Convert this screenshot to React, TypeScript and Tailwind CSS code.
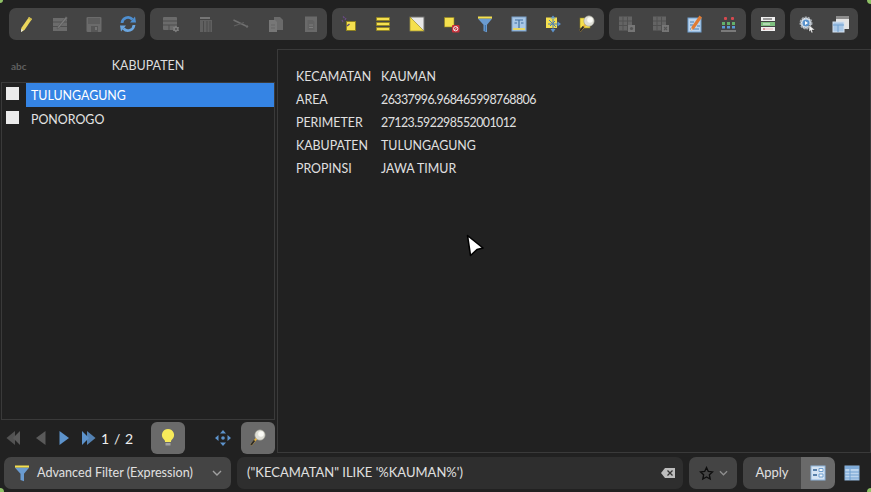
import type { ReactNode } from "react";

const font = { fontFamily: "Lato, 'Noto Sans', sans-serif" };

function Svg({ children, size = 18 }: { children: ReactNode; size?: number }) {
  return (
    <svg width={size} height={size} viewBox="0 0 18 18" className="block">
      {children}
    </svg>
  );
}

function Cell({ children, wide }: { children: ReactNode; wide?: boolean }) {
  return (
    <div className={`flex h-8 shrink-0 items-center justify-center ${wide ? "w-[35px]" : "w-[34px]"}`}>{children}</div>
  );
}

function Group({ children, className }: { children: ReactNode; className: string }) {
  return <div className={`flex h-8 items-center rounded-[7px] bg-[#444444] ${className}`}>{children}</div>;
}

const grey = "#6b6b6b";
const yellow = "#f5e04e";
const edge = "#8f8220";

const Pencil = () => (
  <Svg>
    <path d="M12 2 L15 4 L7.5 15 L4 17 L4.3 13 Z" fill="#ecd75c" />
    <path d="M12 2 L15 4 L14 5.4 L11 3.4 Z" fill="#cdb94c" />
    <path d="M4.2 14 L6.3 15.6 L4 17 Z" fill="#e8e8e0" />
  </Svg>
);
const EditGrid = () => (
  <Svg>
    <rect x="2" y="3" width="14" height="13" fill={grey} />
    <path d="M2 7h14M2 11.5h14" stroke="#505050" strokeWidth="1.2" />
    <path d="M15 1.5 L16.5 3 L8 13 L6 14 L6.5 12 Z" fill="#7a7a7a" stroke="#505050" strokeWidth="0.5" />
  </Svg>
);
const Save = () => (
  <Svg>
    <rect x="1.5" y="2" width="15" height="15" rx="1" fill={grey} />
    <rect x="3" y="3" width="12" height="6" fill="#5d5d5d" />
    <rect x="6" y="11" width="7" height="6" fill="#575757" />
    <rect x="10" y="12" width="2" height="3" fill="#747474" />
  </Svg>
);
const Refresh = () => (
  <svg width="18" height="18" viewBox="0 0 18 18" fill="none" className="block">
    <path d="M3 8 A6 6 0 0 1 13.5 4.5" stroke="#4f8fd0" strokeWidth="2.8" />
    <path d="M11 7.5 L17 7.5 L16 1.5 Z" fill="#4f8fd0" />
    <path d="M15 10 A6 6 0 0 1 4.5 13.5" stroke="#6aa5de" strokeWidth="2.8" />
    <path d="M7 10.5 L1 10.5 L2 16.5 Z" fill="#6aa5de" />
  </svg>
);
const AddCol = () => (
  <Svg>
    <rect x="1" y="2" width="14" height="13" rx="1" fill={grey} />
    <path d="M1 6h14M1 10h14M7 10v5" stroke="#4f4f4f" />
    <path d="M14 10.5 L15 12 L17 12 L16.5 14 L17 16 L15 16 L14 17.5 L12.5 16 L11 16 L11.5 14 L11 12 L12.5 12 Z" fill="#7d7d7d" />
    <circle cx="14" cy="14" r="1" fill="#4f4f4f" />
  </Svg>
);
const DeleteCol = () => (
  <Svg>
    <path d="M3 2h10v2H3z" fill="#757575" />
    <rect x="3" y="5" width="12" height="12" fill="#606060" />
    <path d="M6.5 6v11M10 6v11M13 6v11" stroke="#4a4a4a" />
  </Svg>
);
const Cut = () => (
  <Svg>
    <path d="M1.5 5 L14 11" stroke="#6f6f6f" strokeWidth="1.5" />
    <path d="M2 11 L12 7.5" stroke="#606060" strokeWidth="1.1" />
    <circle cx="15" cy="11.5" r="1.2" fill="#6c6c6c" />
  </Svg>
);
const Copy = () => (
  <Svg>
    <path d="M7 2h6l3 3v10H7z" fill="#6a6a6a" />
    <path d="M2 5h6l2 2v10H2z" fill="#777777" />
    <path d="M4 10h4M4 13h4" stroke="#666" />
  </Svg>
);
const Paste = () => (
  <Svg>
    <rect x="3" y="1.5" width="12" height="15.5" fill="#6a6a6a" />
    <path d="M5.5 5h5l2 2v8h-7z" fill="#626262" />
    <path d="M7 10h4M7 12.5h4" stroke="#7d7d7d" />
  </Svg>
);
const SelectExpr = () => (
  <Svg>
    <rect x="6.5" y="6.5" width="9" height="9" fill={yellow} stroke={edge} />
    <path d="M3 1.5 L4.5 3 M2 5 L3 7 M6 3 L5 5" stroke="#6b4a86" strokeWidth="1.2" />
    <path d="M7 11 L9.5 9" stroke="#5b4a76" strokeWidth="1.4" />
  </Svg>
);
const Rows = () => (
  <Svg>
    <path d="M2.5 2.5h13v3h-13zM2.5 7.5h13v3h-13zM2.5 12.5h13v3h-13z" fill={yellow} stroke={edge} strokeWidth="0.8" />
  </Svg>
);
const Invert = () => (
  <Svg>
    <rect x="2" y="2" width="14" height="14" fill="#e8e8e8" stroke="#6e6e6e" />
    <path d="M2 2 L16 16 L2 16 Z" fill={yellow} stroke={edge} strokeWidth="0.6" />
  </Svg>
);
const Deselect = () => (
  <Svg>
    <rect x="2.5" y="2.5" width="9.5" height="9.5" fill={yellow} stroke={edge} strokeWidth="0.6" />
    <rect x="10" y="10" width="7.5" height="7.5" rx="1" fill="#c9303a" />
    <circle cx="13.7" cy="13.7" r="2.2" fill="none" stroke="#f2f2f2" strokeWidth="1" />
    <path d="M12.2 15.2 L15.2 12.2" stroke="#f2f2f2" strokeWidth="0.9" />
  </Svg>
);
const Funnel = () => (
  <Svg>
    <path d="M2 1.5h14v2.2H2z" fill={yellow} />
    <path d="M2 3.7h14l-5 6v7.5L7.5 16v-6.3z" fill="#6a9bd0" />
    <path d="M8.8 10h1.2v6h-1.2z" fill="#3f75ad" />
  </Svg>
);
const BookIcon = () => (
  <Svg>
    <rect x="2" y="2" width="14" height="14" fill="#a9c7e6" stroke="#7aa0c8" />
    <path d="M5 5h8M9 5v8M4.5 8h2.5M11 8h2.5" stroke="#3f6f9f" strokeWidth="1.2" />
    <rect x="3" y="13" width="12" height="2" fill="#e8d766" />
  </Svg>
);
const PanSel = () => (
  <Svg>
    <rect x="2" y="2.5" width="11" height="10.5" fill={yellow} />
    <path d="M9 0.5 L11.5 3.5 H6.5 Z M9 17.5 L6.5 14 H11.5 Z M17 9 L13.5 6.5 V11.5 Z" fill="#5d93cc" />
    <path d="M5 5 L12 12 M6 11 L11 6 M9 4v10M4 9h10" stroke="#4a7fb5" />
  </Svg>
);
const ZoomSel = ({ square = true }: { square?: boolean }) => (
  <Svg>
    {square && <rect x="2" y="3" width="10" height="10" fill={yellow} stroke={edge} strokeWidth="0.6" />}
    <path d="M8 9 L2 16" stroke="#e8b33c" strokeWidth="2" />
    <path d="M5.5 11.5 L2 16" stroke="#2b2b2b" strokeWidth="2" />
    <circle cx="11" cy="6" r="5.2" fill="#deded6" stroke="#9a9a90" strokeWidth="0.6" />
    <circle cx="12" cy="5" r="2.8" fill="#fbfbf6" />
  </Svg>
);
const Columns = ({ mark }: { mark: "cog" | "x" }) => (
  <Svg>
    <rect x="1" y="1.5" width="13" height="14" fill="#646464" />
    <path d="M5 1.5v14M9.5 1.5v14M1 6h13M1 10.5h13" stroke="#505050" />
    <rect x="10" y="10" width="7" height="7" fill="#767676" />
    {mark === "cog" ? (
      <circle cx="13.5" cy="13.5" r="1.6" fill="#555" />
    ) : (
      <path d="M12 12l3 3M15 12l-3 3" stroke="#555" strokeWidth="1.1" />
    )}
  </Svg>
);
const FormEdit = () => (
  <Svg>
    <rect x="2" y="3" width="13" height="14" fill="#bcd5ee" stroke="#6f9fd0" />
    <path d="M4 7h4M4 10h3M4 14h9M11 11h3" stroke="#4a7fb5" />
    <path d="M13.5 0.5 L16 2.5 L8 14 L5 15.5 L5.5 12 Z" fill="#e07b33" />
    <path d="M5.4 13 L6.9 14.3 L5 15.5 Z" fill="#f2e0c8" />
  </Svg>
);
const Dots = () => (
  <Svg>
    <rect x="4" y="2" width="3" height="3" rx="1" fill="#d8494f" />
    <rect x="11" y="2" width="3" height="3" rx="1" fill="#d8494f" />
    <rect x="2" y="7" width="3" height="3" fill="#63b06a" />
    <rect x="7" y="7" width="3" height="3" fill="#63b06a" />
    <rect x="12" y="7" width="3" height="3" fill="#63b06a" />
    <rect x="2" y="11" width="3" height="2.5" fill="#5c9ad6" />
    <rect x="7" y="11" width="3" height="2.5" fill="#5c9ad6" />
    <rect x="12" y="11" width="3" height="2.5" fill="#5c9ad6" />
    <path d="M1 16h15" stroke="#b0b0b0" />
  </Svg>
);
const Stack = () => (
  <Svg>
    <rect x="2" y="2" width="14" height="4" fill="#f0f0f0" />
    <path d="M4 4h9" stroke="#444" />
    <rect x="2" y="7" width="14" height="4" fill="#7fbf7f" />
    <path d="M4 9h7" stroke="#e8f4e8" />
    <rect x="2" y="12" width="14" height="4" fill="#f0f0f0" />
    <path d="M4 14h2" stroke="#c0303a" />
    <path d="M6 14h8" stroke="#efb2b8" />
  </Svg>
);
const ToolCog = () => (
  <Svg>
    <circle cx="8" cy="8" r="5.5" fill="#dfe6ee" stroke="#a8aeb4" strokeDasharray="2 1" strokeWidth="2" />
    <circle cx="8" cy="8" r="3.6" fill="#5b93cc" />
    <path d="M7 6 L10 8 L7 10 Z" fill="#fff" />
    <path d="M11 10 L17 15 L14 15 L15 17.5 L13.5 18 L12.5 15.5 L11 17 Z" fill="#f3f3f3" stroke="#222" strokeWidth="0.4" />
  </Svg>
);
const Windows = () => (
  <Svg>
    <rect x="4" y="1" width="13" height="13" fill="#e4e4e4" />
    <rect x="4" y="1" width="13" height="3" fill="#8c8c8c" />
    <rect x="1" y="7" width="11" height="10" fill="#a9c7e6" stroke="#d5e2f0" />
    <path d="M1 10h11M6 10v7" stroke="#6f9fd0" />
  </Svg>
);
const Arrow = ({ left, color, double }: { left?: boolean; color: string; double?: boolean }) => (
  <svg width="15" height="16" viewBox="0 0 15 16" className="block">
    <g transform={left ? "matrix(-1 0 0 1 15 0)" : undefined}>
      {double ? (
        <>
          <path d="M1 1 L8 8 L1 15 Z" fill={color} />
          <path d="M6 1 L14.5 8 L6 15 Z" fill={color} opacity="0.85" />
        </>
      ) : (
        <path d="M2.5 1 L12 8 L2.5 15 Z" fill={color} />
      )}
    </g>
  </svg>
);
const Bulb = () => (
  <svg width="18" height="20" viewBox="0 0 18 20" className="block">
    <path d="M9 1 A6 6 0 0 1 13 11.5 C12 12.5 12 13 12 14 H6 C6 13 6 12.5 5 11.5 A6 6 0 0 1 9 1 Z" fill="#f7ea5a" />
    <path d="M6.5 15h5v2.5h-5z" fill="#a3a3a3" />
  </svg>
);
const Pan = () => (
  <Svg>
    <path d="M9 1 L12 4.5 H6 Z M9 17 L6 13.5 H12 Z M1 9 L4.5 6 V12 Z M17 9 L13.5 12 V6 Z" fill="#5d93cc" />
    <circle cx="9" cy="9" r="1.8" fill="#5d93cc" />
  </Svg>
);
const FormView = () => (
  <Svg>
    <rect x="2" y="2" width="14" height="14" fill="#d5e4f3" stroke="#8fb5dc" />
    <path d="M4 6h4M4 11h4" stroke="#2f5f93" strokeWidth="1.6" />
    <path d="M10 4.5h4v3h-4zM10 10h4v3h-4z" fill="#f5f8fb" stroke="#6f9fd0" />
  </Svg>
);
const TableView = () => (
  <Svg>
    <rect x="2" y="2" width="14" height="14" fill="#bcd5ee" stroke="#8fb5dc" />
    <rect x="2" y="2" width="14" height="3" fill="#7fabd8" />
    <path d="M2 8h14M2 11h14M2 14h14M7 5v11" stroke="#6f9fd0" />
  </Svg>
);

const fields = [
  ["KECAMATAN", "KAUMAN"],
  ["AREA", "26337996.968465998768806"],
  ["PERIMETER", "27123.592298552001012"],
  ["KABUPATEN", "TULUNGAGUNG"],
  ["PROPINSI", "JAWA TIMUR"],
];

export default function App() {
  return (
    <div style={font} className="relative flex h-[492px] w-[871px] flex-col overflow-hidden bg-[#212121] text-[13px] text-[#e4e4e4]">
      {/* window corners */}
      <div className="absolute left-0 top-0 h-[3px] w-[3px] rounded-br-[3px] bg-[#8fc166]" />
      <div className="absolute right-0 top-0 h-[4px] w-[4px] rounded-bl-[4px] bg-[#8fc166]" />
      <div className="absolute bottom-0 left-0 h-[4px] w-[4px] rounded-tr-[4px] bg-[#8fc166]" />
      <div className="absolute bottom-0 right-0 h-[4px] w-[4px] rounded-tl-[4px] bg-[#8fc166]" />

      <div className="flex h-[49px] shrink-0 gap-[5px] pl-[9px] pt-2">
        <Group className="w-[136px] justify-center">
          <Cell><Pencil /></Cell><Cell><EditGrid /></Cell><Cell><Save /></Cell><Cell><Refresh /></Cell>
        </Group>
        <Group className="w-[177px] pl-[3px]">
          <Cell wide><AddCol /></Cell><Cell wide><DeleteCol /></Cell><Cell wide><Cut /></Cell><Cell wide><Copy /></Cell><Cell wide><Paste /></Cell>
        </Group>
        <Group className="w-[272px] justify-center">
          <Cell><SelectExpr /></Cell><Cell><Rows /></Cell><Cell><Invert /></Cell><Cell><Deselect /></Cell>
          <Cell><Funnel /></Cell><Cell><BookIcon /></Cell><Cell><PanSel /></Cell><Cell><ZoomSel /></Cell>
        </Group>
        <Group className="w-[137px] justify-center">
          <Cell><Columns mark="cog" /></Cell><Cell><Columns mark="x" /></Cell><Cell><FormEdit /></Cell><Cell><Dots /></Cell>
        </Group>
        <Group className="w-[34px] justify-center">
          <Cell><Stack /></Cell>
        </Group>
        <Group className="w-[68px] justify-center">
          <Cell><ToolCog /></Cell><Cell><Windows /></Cell>
        </Group>
      </div>

      <div className="flex min-h-0 flex-1 pl-px">
        <div className="flex w-[276px] shrink-0 flex-col pr-px">
          <div className="relative flex h-[33px] shrink-0 items-center justify-center pt-[1px] text-[12.5px] text-[#dedede]">
            <span className="absolute left-[10px] text-[10px] font-bold text-[#5f5f5f]">abc</span>
            <span className="ml-[19px]">KABUPATEN</span>
          </div>
          <div className="mr-px flex-1 border border-[#3a3a3a] text-[12.4px]">
            <div className="flex h-6 items-center">
              <span className="ml-[4px] h-[13px] w-[13px] shrink-0 -translate-y-0.5 bg-[#ebebeb]" />
              <span className="ml-[7px] flex h-6 flex-1 items-center bg-[#3584e4] pl-[5px] pt-[2px] text-white">TULUNGAGUNG</span>
            </div>
            <div className="flex h-6 items-center">
              <span className="ml-[4px] h-[13px] w-[13px] shrink-0 -translate-y-0.5 bg-[#ebebeb]" />
              <span className="ml-[12px] pt-[2px]">PONOROGO</span>
            </div>
          </div>
          <div className="flex h-[37px] shrink-0 items-start pl-[5px] pt-[2px]">
            <div className="flex h-8 w-[15px] items-center justify-center"><Arrow left double color="#5a5a5a" /></div>
            <div className="ml-[12px] flex h-8 w-[15px] items-center justify-center"><Arrow left color="#5a5a5a" /></div>
            <div className="ml-[9px] flex h-8 w-[15px] items-center justify-center"><Arrow color="#5d93cc" /></div>
            <div className="ml-[9px] flex h-8 w-[15px] items-center justify-center"><Arrow double color="#5d93cc" /></div>
            <span className="ml-[5px] flex h-8 items-center text-[14px] tracking-[0.6px] text-[#eeeeee]">1 / 2</span>
            <div className="ml-[17px] flex h-8 w-[34px] items-center justify-center rounded-[6px] bg-[#6a6a6a]"><Bulb /></div>
            <div className="ml-[29px] flex h-8 w-[18px] items-center justify-center"><Pan /></div>
            <div className="ml-[9px] flex h-8 w-[34px] items-center justify-center rounded-[6px] bg-[#6a6a6a]"><ZoomSel square={false} /></div>
          </div>
        </div>
        <div className="mb-[4px] flex-1 border border-[#3a3a3a] pl-[18px] pt-[18px]">
          <div className="grid grid-cols-[85px_1fr] gap-y-[5px] text-[12.4px] text-[#e0e0e0]">
            {fields.map(([name, value]) => (
              <div key={name} className="contents">
                <span className="h-[18px] leading-[18px]">{name}</span>
                <span className={`h-[18px] leading-[18px] ${/^\d/.test(value) ? "tracking-[-0.56px]" : ""}`}>{value}</span>
              </div>
            ))}
          </div>
        </div>
      </div>

      <div className="flex h-[35px] shrink-0 items-start pl-1">
        <div className="flex h-8 w-[227px] items-center rounded-[7px] bg-[#444444] pl-[9px] text-[12.6px] text-[#e0e0e0]">
          <Svg><path d="M2 1.5h14v2.2H2z" fill={yellow} /><path d="M2 3.7h14l-5 6v7.5L7.5 16v-6.3z" fill="#6a9bd0" /></Svg>
          <span className="ml-[6px]">Advanced Filter (Expression)</span>
          <svg width="10" height="6" viewBox="0 0 10 6" className="ml-auto mr-[9px]"><path d="M1 1 L5 5 L9 1" fill="none" stroke="#a0a0a0" strokeWidth="1.4" /></svg>
        </div>
        <div className="ml-[6px] flex h-8 w-[446px] items-center justify-between rounded-[7px] bg-[#2e2e2e] pl-[10px] pr-[8px] text-[#e0e0e0]">
          <span>("KECAMATAN" ILIKE '%KAUMAN%')</span>
          <svg width="14" height="10" viewBox="0 0 14 10"><path d="M4 0h10v10H4L0 5z" fill="#bdbdbd" /><path d="M6.5 2.5l5 5M11.5 2.5l-5 5" stroke="#333" strokeWidth="1.3" /></svg>
        </div>
        <div className="ml-[6px] flex h-8 w-[48px] items-center justify-center gap-[5px] rounded-[7px] bg-[#444444]">
          <svg width="15" height="15" viewBox="0 0 24 24"><path d="M12 2.5l2.9 6.2 6.6.8-4.9 4.6 1.3 6.7-5.9-3.3-5.9 3.3 1.3-6.7L2.5 9.5l6.6-.8z" fill="none" stroke="#0e0e0e" strokeWidth="2.2" /></svg>
          <svg width="9" height="6" viewBox="0 0 10 6"><path d="M1 1 L5 5 L9 1" fill="none" stroke="#8f8f8f" strokeWidth="1.4" /></svg>
        </div>
        <div className="ml-[6px] flex h-8 w-[58px] items-center justify-center rounded-l-[7px] bg-[#444444] text-[#e0e0e0]">Apply</div>
        <div className="flex h-8 w-[34px] items-center justify-center rounded-r-[7px] bg-[#6a6a6a]"><FormView /></div>
        <div className="ml-[8px] flex h-8 w-[18px] items-center justify-center"><TableView /></div>
      </div>

      {/* mouse pointer */}
      <svg width="20" height="24" viewBox="0 0 20 24" className="absolute left-[465px] top-[234px]">
        <path d="M2.5 1.5 L18 14 L12 15.5 L5.5 21.5 Z" fill="#ffffff" stroke="#000000" strokeWidth="1.6" strokeLinejoin="round" />
      </svg>
    </div>
  );
}
